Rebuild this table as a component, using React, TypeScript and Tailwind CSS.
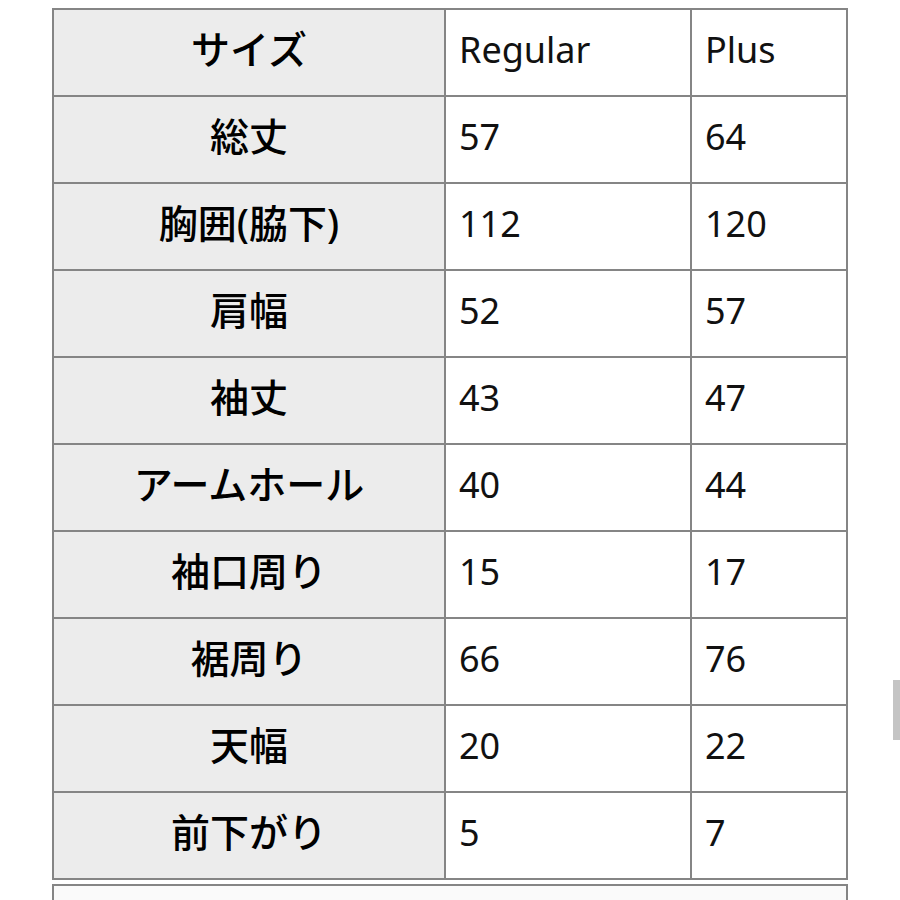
import React from 'react';

const rows: [string, string, string][] = [
  ['サイズ', 'Regular', 'Plus'],
  ['総丈', '57', '64'],
  ['胸囲(脇下)', '112', '120'],
  ['肩幅', '52', '57'],
  ['袖丈', '43', '47'],
  ['アームホール', '40', '44'],
  ['袖口周り', '15', '17'],
  ['裾周り', '66', '76'],
  ['天幅', '20', '22'],
  ['前下がり', '5', '7'],
];

export default function App() {
  return (
    <div
      className="relative w-[900px] h-[900px] overflow-hidden bg-white pt-[8px] pl-[52px]"
      style={{ fontFamily: '"Noto Sans", "Noto Sans CJK JP", sans-serif' }}
    >
      <div className="w-[796px] border-l-2 border-t-2 border-[#858585] grid grid-cols-[392px_246px_156px]">
        {rows.map(([label, regular, plus]) => (
          <React.Fragment key={label}>
            <div className="h-[87px] flex items-center justify-center pb-[6px] bg-[#ececec] border-r-2 border-b-2 border-[#858585] text-[39px] font-medium text-black">
              {label}
            </div>
            <div className="h-[87px] flex items-center pl-[13px] pb-[6px] bg-white border-r-2 border-b-2 border-[#858585] text-[36px] text-[#111]">
              {regular}
            </div>
            <div className="h-[87px] flex items-center pl-[13px] pb-[6px] bg-white border-r-2 border-b-2 border-[#858585] text-[36px] text-[#111]">
              {plus}
            </div>
          </React.Fragment>
        ))}
      </div>
      <div className="mt-[4px] w-[796px] h-[40px] border-l-2 border-t-2 border-r-2 border-[#858585] bg-[#fafafa]" />
      <div className="absolute right-0 top-[680px] w-[7px] h-[60px] bg-[#c4c4c4]" />
    </div>
  );
}
